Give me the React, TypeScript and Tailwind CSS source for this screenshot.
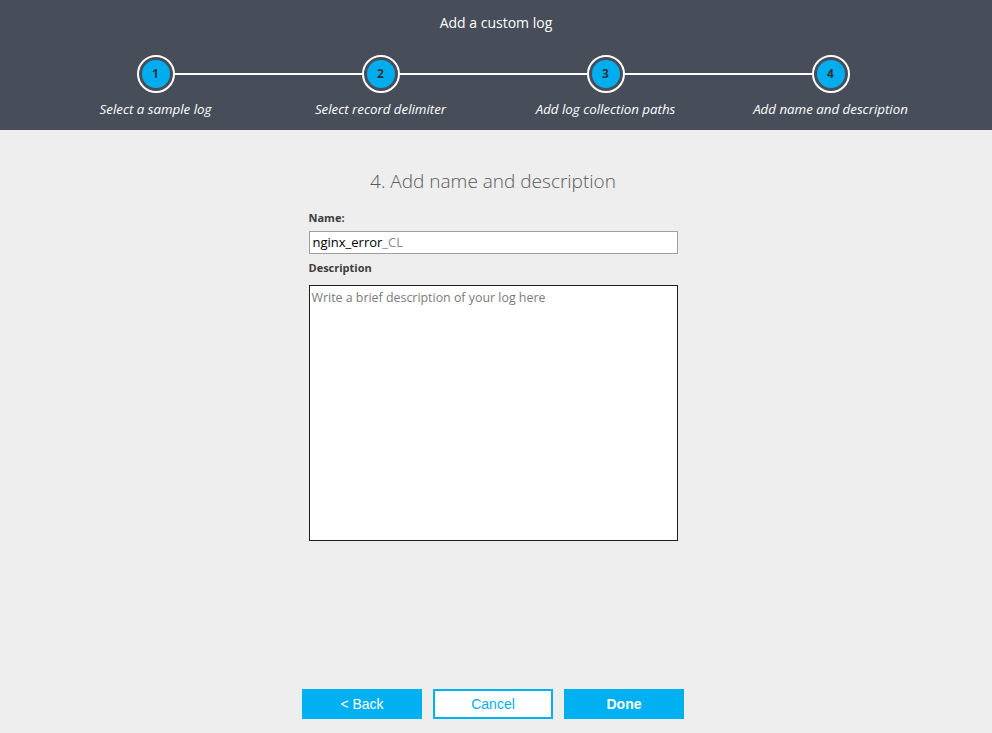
import React from 'react';

const steps = [
    { n: 1, label: 'Select a sample log' },
    { n: 2, label: 'Select record delimiter' },
    { n: 3, label: 'Add log collection paths' },
    { n: 4, label: 'Add name and description' },
];

const uiFont = { fontFamily: '"Open Sans", "Noto Sans", "Liberation Sans", sans-serif' };

const StepCircle: React.FC<{ n: number }> = ({ n }) => (
    <div className="w-[38px] h-[38px] rounded-full border-2 border-white bg-[#474e59] flex items-center justify-center">
        <div className="w-[28px] h-[28px] rounded-full bg-[#00adef] flex items-center justify-center text-[12px] font-bold text-[#2f343b] leading-none">
            {n}
        </div>
    </div>
);

export default function App() {
    return (
        <div className="w-[992px] h-[733px] flex flex-col bg-[#eeeeee] overflow-hidden" style={uiFont}>
            {/* wizard header */}
            <div className="h-[130px] bg-[#474e59] flex flex-col shrink-0">
                <div className="text-center text-white text-[14px] pt-[13px] leading-[20px]">Add a custom log</div>
                <div className="relative w-[900px] ml-[43px] mt-[22px] grid grid-cols-4">
                    <div className="absolute left-[112px] right-[112px] top-[18px] h-[2px] bg-white" />
                    {steps.map(s => (
                        <div key={s.n} className="relative flex flex-col items-center">
                            <StepCircle n={s.n} />
                            <div className="mt-[7px] text-white italic text-[13.3px] leading-[18px] whitespace-nowrap">{s.label}</div>
                        </div>
                    ))}
                </div>
            </div>

            {/* form body */}
            <div className="flex-1 flex flex-col items-center pr-[6px]">
                <h2 className="mt-[38px] text-[19px] font-light text-[#5a5a5a] leading-[26px]">4. Add name and description</h2>
                <div className="w-[369px] mt-[16px] flex flex-col">
                    <label className="text-[11px] font-bold text-[#3c3c3c] leading-[16px]">Name:</label>
                    <div className="mt-[5px] h-[23px] bg-white border border-[#a0a0a0] flex items-center px-[3px] text-[13px] leading-none">
                        <span className="text-black">nginx_error</span>
                        <span className="text-[#8a8a8a]">_CL</span>
                    </div>
                    <label className="mt-[6px] text-[11px] font-bold text-[#3c3c3c] leading-[16px]">Description</label>
                    <div className="mt-[9px] h-[256px] bg-white border border-[#1e1e1e] px-[2px] pt-[4px] text-[12.4px] text-[#7a7a7a] leading-[16px]">
                        Write a brief description of your log here
                    </div>
                </div>

                <div className="mt-auto mb-[14px] flex gap-[11px] text-[14px]" style={{ fontFamily: '"Liberation Sans", Arial, sans-serif' }}>
                    <button className="w-[120px] h-[30px] bg-[#00b0f0] text-white">&lt; Back</button>
                    <button className="w-[120px] h-[30px] bg-white border-2 border-[#00b0f0] text-[#00b0f0]">Cancel</button>
                    <button className="w-[120px] h-[30px] bg-[#00b0f0] text-white font-bold">Done</button>
                </div>
            </div>
        </div>
    );
}
